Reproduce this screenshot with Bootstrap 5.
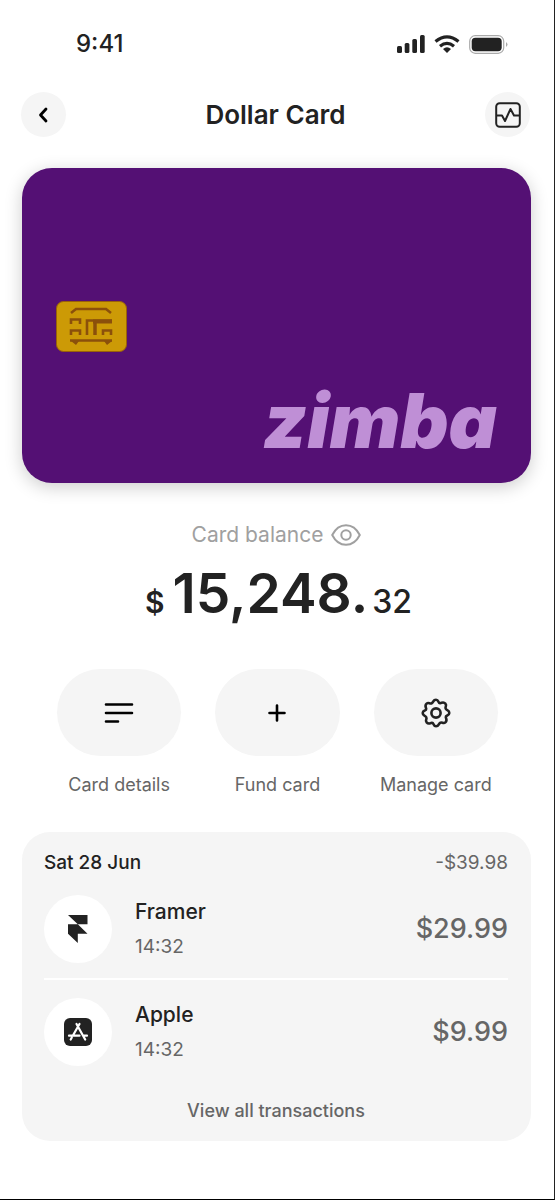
<!DOCTYPE html>
<html lang="en">
<head>
<meta charset="utf-8">
<meta name="viewport" content="width=device-width, initial-scale=1">
<title>Dollar Card</title>
<link href="https://cdn.jsdelivr.net/npm/bootstrap@5.3.0/dist/css/bootstrap.min.css" rel="stylesheet">
<style>
  :root { --ink: #222; --soft: #f5f5f5; --muted: #666; }
  body { font-family: Inter, "Liberation Sans", sans-serif; color: var(--ink); background: #fff; line-height: 28px; }
  .screen { min-height: 100vh; padding: 0 23px 24px 22px; border-right: 1px solid #222; border-bottom: 1px solid #000; }
  svg { display: block; }
  .status { height: 88px; padding: 0 23px 0 54px; font-size: 24px; font-weight: 500; }
  .status-icons { gap: 9px; }
  .top-bar { margin: 0 1px 0 -1px; }
  .round-btn { width: 45px; height: 45px; border-radius: 50%; background: var(--soft); color: #000; }
  .page-title { font-size: 26px; line-height: 32px; font-weight: 600; }
  .bank-card { aspect-ratio: 509 / 315; margin-top: 31px; padding: 0 34px 24px; border-radius: 30px; background: #541074; box-shadow: 0 4px 18px rgba(0, 0, 0, .2); }
  .chip { margin-bottom: 31px; }
  .brand { font-size: 75px; line-height: 76px; font-weight: 900; font-style: italic; color: #bf8fd6; }
  .balance-label { margin-top: 37px; font-size: 21px; line-height: 30px; color: #a0a0a0; }
  .amount { margin-top: 7px; padding-left: 4px; font-weight: 600; line-height: 72px; }
  .amount .sign { font-size: 30px; }
  .amount .whole { font-size: 55px; }
  .amount .cents { font-size: 32px; font-weight: 500; }
  .actions { margin-top: 31px; padding: 0 33px 0 35px; }
  .action-row { --bs-gutter-x: 34px; }
  .action { color: var(--muted); font-size: 18px; line-height: 28px; white-space: nowrap; }
  .pill { width: 100%; height: 87px; border-radius: 44px; background: var(--soft); color: #000; margin-bottom: 15px; }
  .panel { margin-top: 33px; padding: 17px 23px 16px 22px; border-radius: 28px; background: var(--soft); }
  .day { font-size: 19px; font-weight: 500; }
  .sum { font-size: 19px; color: var(--muted); }
  .entry { padding: 15px 0 13px; }
  .entry + .entry { border-top: 2px solid #fff; }
  .logo { width: 68px; height: 68px; border-radius: 50%; background: #fff; }
  .entry-text { padding: 3px 0 0 23px; }
  .merchant { font-size: 21px; font-weight: 500; line-height: 34px; }
  .time { font-size: 19px; line-height: 36px; color: var(--muted); }
  .price { font-size: 27px; font-weight: 500; color: var(--muted); }
  .view-all { padding-top: 16px; }
  .all-link { font-size: 18px; font-weight: 500; color: var(--muted); }
</style>
</head>
<body>
<div class="screen">
  <div class="status d-flex align-items-center justify-content-between">
    <span>9:41</span>
    <div class="status-icons d-flex align-items-center">
      <svg width="28" height="18" viewBox="0 0 28 18" fill="#222"><rect x="0" y="11" width="5" height="7" rx="1.5"/><rect x="7.700" y="8" width="4.700" height="10" rx="1.500"/><rect x="15.300" y="4" width="4.700" height="14" rx="1.500"/><rect x="23" y="0" width="4.700" height="18" rx="1.500"/></svg>
      <svg width="26" height="18" viewBox="0 0 26 18" fill="none" stroke="#222" stroke-width="3.200"><path d="M1.500 6.500Q13-2.800 24.500 6.500M6 11.200Q13 5.500 20 11.200"/><path fill="#222" stroke="none" d="M9 14Q13 10.500 17 14L13 18Z"/></svg>
      <svg width="39" height="19" viewBox="0 0 39 19"><rect x=".7" y=".7" width="34" height="17.600" rx="5.500" fill="none" stroke="#aaa" stroke-width="1.200"/><rect x="2.700" y="2.700" width="30" height="13.600" rx="3.700" fill="#222"/><path d="M37 7v5q3-2.500 0-5" fill="#aaa"/></svg>
    </div>
  </div>

  <header class="top-bar d-flex align-items-center justify-content-between pt-1">
    <button class="round-btn btn p-0 border-0 d-flex align-items-center justify-content-center" aria-label="Back">
      <svg width="22" height="20" viewBox="0 0 22 20" fill="none" stroke="currentColor" stroke-width="2.800" stroke-linecap="round" stroke-linejoin="round"><path d="M13 4L7.500 10l5.500 6"/></svg>
    </button>
    <h1 class="page-title m-0">Dollar Card</h1>
    <button class="round-btn btn p-0 border-0 d-flex align-items-center justify-content-center" aria-label="Statistics">
      <svg width="26" height="26" viewBox="0 0 26 26" fill="none" stroke="#222" stroke-width="2" stroke-linejoin="round"><rect x="1.200" y="1.200" width="23.600" height="23.600" rx="3.500"/><path d="M1 13.500h6l3 5.500 5.500-12 3.500 6.500h6"/></svg>
    </button>
  </header>

  <section class="bank-card d-flex flex-column justify-content-end" aria-label="Zimba card">
    <svg class="chip" width="71" height="51" viewBox="0 0 71 51"><rect x=".5" y=".5" width="70" height="50" rx="7" fill="#cc9a06" stroke="#9a6208"/><g fill="none" stroke="#8b500b" stroke-width="2.600"><path d="M15 12l5-4h30l5 4M14 39.500h42"/><path d="M15 23v-4.500h9V23M15 34v-4.500h9V34M47 34v-4.500h8V34M31 34V19.500h25"/><path d="M39 34V22" stroke-width="3.500"/><path d="M37 20.500h19" stroke-width="4"/></g><path d="M15 40h8l-3 4zM48 40h8l-5 4z" fill="#8b500b"/></svg>
    <div class="brand text-end">zimba</div>
  </section>

  <div class="balance-label d-flex align-items-center justify-content-center gap-2">
    <span>Card balance</span>
    <svg width="30" height="22" viewBox="0 0 30 22" fill="none" stroke="#a0a0a0" stroke-width="2"><path d="M1.200 11C4.500 4.500 9.200 1.200 15 1.200S25.500 4.500 28.800 11C25.500 17.500 20.800 20.800 15 20.800S4.500 17.500 1.200 11Z" stroke-linejoin="round"/><circle cx="15" cy="11" r="4.700"/></svg>
  </div>
  <div class="amount d-flex align-items-baseline justify-content-center"><span class="sign me-2">$</span><span class="whole">15,248.</span><span class="cents ms-1">32</span></div>

  <div class="actions">
    <div class="action-row row text-center">
      <div class="col-4 action"><button id="details" aria-labelledby="details-label" class="pill btn p-0 border-0 d-flex align-items-center justify-content-center"><svg width="30" height="22" viewBox="0 0 30 22" fill="none" stroke="currentColor" stroke-width="2.600" stroke-linecap="round"><path d="M2 2.500h26M2 11h26M2 19.500h12"/></svg></button><label id="details-label" for="details">Card details</label></div>
      <div class="col-4 action"><button id="fund" aria-labelledby="fund-label" class="pill btn p-0 border-0 d-flex align-items-center justify-content-center"><svg width="18" height="18" viewBox="0 0 18 18" fill="none" stroke="currentColor" stroke-width="2.600" stroke-linecap="round"><path d="M1.500 9h15M9 1.500v15"/></svg></button><label id="fund-label" for="fund">Fund card</label></div>
      <div class="col-4 action"><button id="manage" aria-labelledby="manage-label" class="pill btn p-0 border-0 d-flex align-items-center justify-content-center"><svg width="30" height="30" viewBox="0 0 30 30" fill="none" stroke="#222" stroke-width="2.600" stroke-linejoin="round"><circle cx="15" cy="15" r="4.600"/><path d="M15 1.700C18 1.700 17 5.500 19.100 5.200S22.400 3.400 24.400 5.600 23.500 8.900 24.800 10.900 28.300 12 28.300 15 24.500 17 24.800 19.100 26.600 22.400 24.400 24.400 21.100 23.500 19.100 24.800 18 28.300 15 28.300 13 24.500 10.900 24.800 7.600 26.600 5.600 24.400 6.500 21.100 5.200 19.100 1.700 18 1.700 15 5.500 13 5.200 10.900 3.400 7.600 5.600 5.600 8.900 6.500 10.900 5.200 12 1.700 15 1.700Z"/></svg></button><label id="manage-label" for="manage">Manage card</label></div>
    </div>
  </div>

  <section class="panel">
    <div class="d-flex justify-content-between"><span class="day">Sat 28 Jun</span><span class="sum">-$39.98</span></div>
    <ul class="list-unstyled m-0">
      <li class="entry d-flex align-items-center">
        <div class="logo d-flex align-items-center justify-content-center flex-shrink-0"><svg width="20" height="28" viewBox="0 0 20 28" fill="#222"><path d="M0 0h19.500v9.300H9.800zM0 9.300h9.800l9.700 9.400H9.800V28L0 18.700z"/></svg></div>
        <div class="entry-text flex-fill"><div class="merchant">Framer</div><div class="time">14:32</div></div>
        <span class="price">$29.99</span>
      </li>
      <li class="entry d-flex align-items-center">
        <div class="logo d-flex align-items-center justify-content-center flex-shrink-0"><svg width="28" height="28" viewBox="0 0 28 28"><rect width="28" height="28" rx="6" fill="#222"/><g fill="none" stroke="#fff" stroke-width="2.200" stroke-linecap="round"><path d="M15.500 6L9.200 17M12.500 6l8.700 15.500M5 17.700h10.500M19.500 17.700H23M7.800 19.500L6.700 21.500"/></g></svg></div>
        <div class="entry-text flex-fill"><div class="merchant">Apple</div><div class="time">14:32</div></div>
        <span class="price">$9.99</span>
      </li>
    </ul>
    <div class="view-all text-center"><a href="#" class="all-link text-decoration-none">View all transactions</a></div>
  </section>
</div>
<script src="https://cdn.jsdelivr.net/npm/bootstrap@5.3.0/dist/js/bootstrap.bundle.min.js"></script>
</body>
</html>
